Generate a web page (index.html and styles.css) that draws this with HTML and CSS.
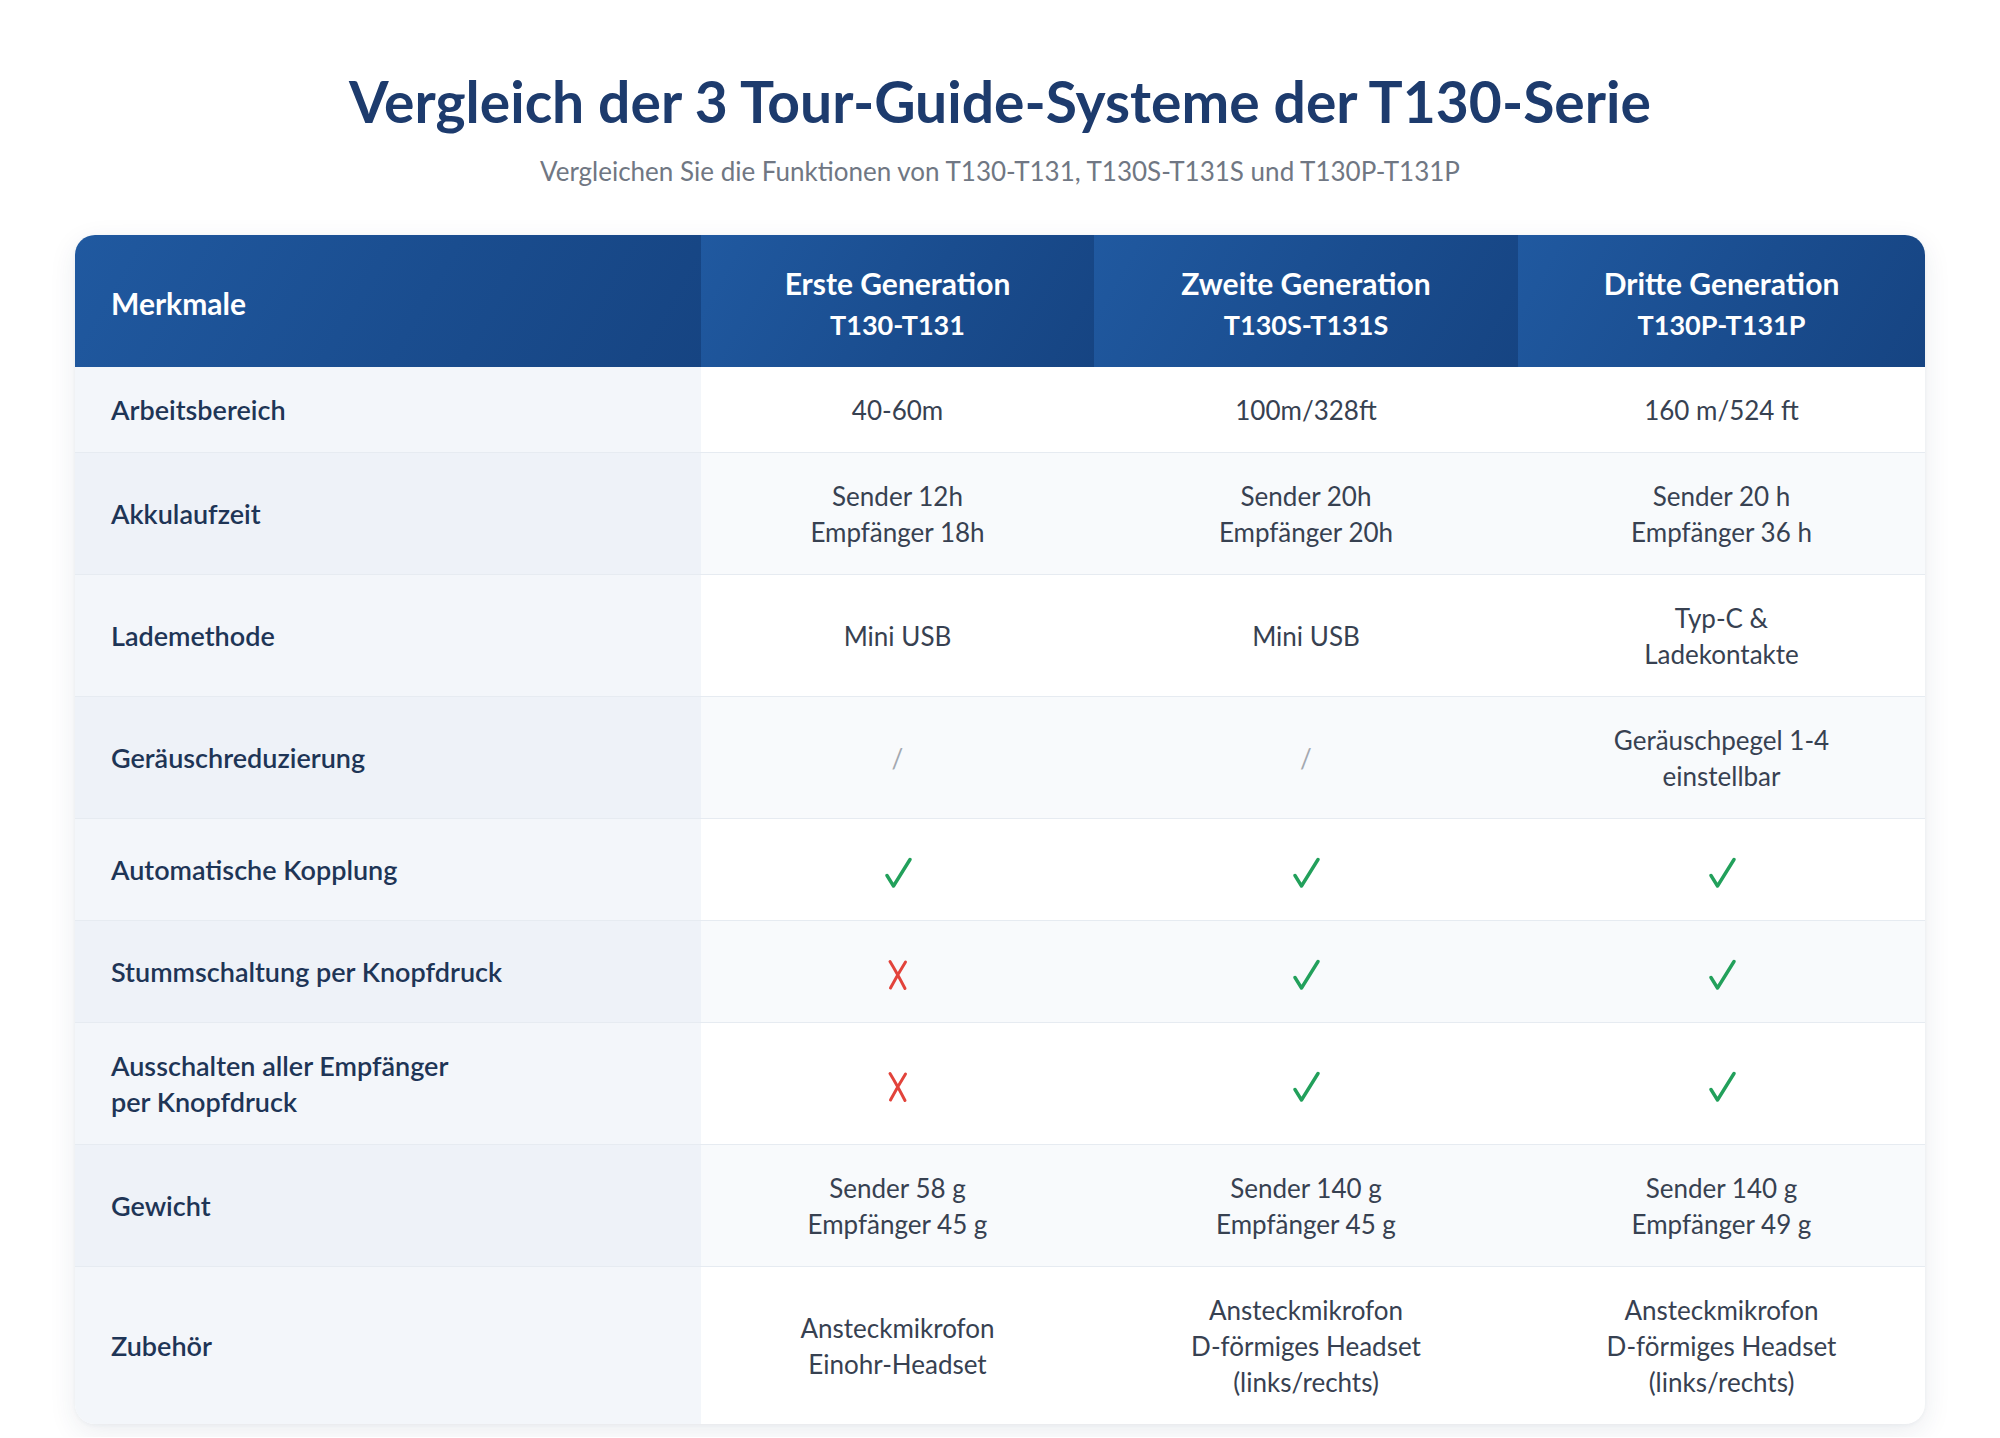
FILE: index.html
```html
<!DOCTYPE html>
<html lang="de">
<head>
<meta charset="utf-8">
<title>Vergleich der T130-Serie</title>
<link rel="stylesheet" href="styles.css">
</head>
<body>
<main class="page">
  <header class="intro">
    <h1 class="title">Vergleich der 3 Tour-Guide-Systeme der T130-Serie</h1>
    <p class="subtitle">Vergleichen Sie die Funktionen von T130-T131, T130S-T131S und T130P-T131P</p>
  </header>

  <div class="table-card">
    <table class="compare">
      <colgroup>
        <col class="c-feature">
        <col class="c-gen1">
        <col class="c-gen2">
        <col class="c-gen3">
      </colgroup>
      <thead>
        <tr>
          <th class="th-feature">Merkmale</th>
          <th><span class="gen">Erste Generation</span><span class="model">T130-T131</span></th>
          <th><span class="gen">Zweite Generation</span><span class="model">T130S-T131S</span></th>
          <th><span class="gen">Dritte Generation</span><span class="model">T130P-T131P</span></th>
        </tr>
      </thead>
      <tbody>
        <tr>
          <td class="feature">Arbeitsbereich</td>
          <td>40-60m</td>
          <td>100m/328ft</td>
          <td>160 m/524 ft</td>
        </tr>
        <tr>
          <td class="feature">Akkulaufzeit</td>
          <td>Sender 12h<br>Empfänger 18h</td>
          <td>Sender 20h<br>Empfänger 20h</td>
          <td>Sender 20 h<br>Empfänger 36 h</td>
        </tr>
        <tr>
          <td class="feature">Lademethode</td>
          <td>Mini USB</td>
          <td>Mini USB</td>
          <td>Typ-C &amp;<br>Ladekontakte</td>
        </tr>
        <tr>
          <td class="feature">Geräuschreduzierung</td>
          <td><span class="none">/</span></td>
          <td><span class="none">/</span></td>
          <td>Geräuschpegel 1-4<br>einstellbar</td>
        </tr>
        <tr>
          <td class="feature">Automatische Kopplung</td>
          <td class="mark"><svg class="icon-yes" viewBox="0 0 28 32" aria-label="ja"><path d="M3 18.5 L9.5 29 L26 2.5"/></svg></td>
          <td class="mark"><svg class="icon-yes" viewBox="0 0 28 32" aria-label="ja"><path d="M3 18.5 L9.5 29 L26 2.5"/></svg></td>
          <td class="mark"><svg class="icon-yes" viewBox="0 0 28 32" aria-label="ja"><path d="M3 18.5 L9.5 29 L26 2.5"/></svg></td>
        </tr>
        <tr>
          <td class="feature">Stummschaltung per Knopfdruck</td>
          <td class="mark"><svg class="icon-no" viewBox="0 0 24 32" aria-label="nein"><path d="M4 2.5 Q11 14 19 29.5 M19.5 3 Q12 15 4.5 29"/></svg></td>
          <td class="mark"><svg class="icon-yes" viewBox="0 0 28 32" aria-label="ja"><path d="M3 18.5 L9.5 29 L26 2.5"/></svg></td>
          <td class="mark"><svg class="icon-yes" viewBox="0 0 28 32" aria-label="ja"><path d="M3 18.5 L9.5 29 L26 2.5"/></svg></td>
        </tr>
        <tr>
          <td class="feature">Ausschalten aller Empfänger<br>per Knopfdruck</td>
          <td class="mark"><svg class="icon-no" viewBox="0 0 24 32" aria-label="nein"><path d="M4 2.5 Q11 14 19 29.5 M19.5 3 Q12 15 4.5 29"/></svg></td>
          <td class="mark"><svg class="icon-yes" viewBox="0 0 28 32" aria-label="ja"><path d="M3 18.5 L9.5 29 L26 2.5"/></svg></td>
          <td class="mark"><svg class="icon-yes" viewBox="0 0 28 32" aria-label="ja"><path d="M3 18.5 L9.5 29 L26 2.5"/></svg></td>
        </tr>
        <tr>
          <td class="feature">Gewicht</td>
          <td>Sender 58 g<br>Empfänger 45 g</td>
          <td>Sender 140 g<br>Empfänger 45 g</td>
          <td>Sender 140 g<br>Empfänger 49 g</td>
        </tr>
        <tr>
          <td class="feature">Zubehör</td>
          <td>Ansteckmikrofon<br>Einohr-Headset</td>
          <td>Ansteckmikrofon<br>D-förmiges Headset<br>(links/rechts)</td>
          <td>Ansteckmikrofon<br>D-förmiges Headset<br>(links/rechts)</td>
        </tr>
      </tbody>
    </table>
  </div>
</main>
</body>
</html>
```

FILE: styles.css
```css
* { box-sizing: border-box; }

html, body {
  margin: 0;
  padding: 0;
  background: #ffffff;
}

body {
  font-family: Lato, "Open Sans", "Liberation Sans", sans-serif;
  color: #374151;
}

.page {
  padding: 67px 75px 13px;
}

.intro {
  text-align: center;
}

.title {
  margin: 0;
  font-size: 57px;
  line-height: 1.2;
  font-weight: 700;
  color: #1d3b6d;
}

.subtitle {
  margin: 21px 0 0;
  font-size: 26px;
  line-height: 1.2;
  color: #707783;
}

.table-card {
  margin-top: 47px;
  border-radius: 20px;
  overflow: hidden;
  background: #ffffff;
  box-shadow: 0 8px 28px rgba(30, 50, 90, 0.09), 0 1px 4px rgba(30, 50, 90, 0.05);
}

.compare {
  width: 100%;
  border-collapse: collapse;
  table-layout: fixed;
}

.c-feature { width: 626px; }
.c-gen1 { width: 393px; }
.c-gen2 { width: 424px; }
.c-gen3 { width: 407px; }

.compare th {
  height: 132px;
  padding: 28px 20px 22px;
  font-weight: 700;
  color: #ffffff;
  text-align: center;
  vertical-align: middle;
  background: linear-gradient(120deg, #2059a0 0%, #1a4d8f 55%, #164482 100%);
}

.compare th .gen,
.compare th .model {
  display: block;
  line-height: 41px;
}

.compare th .gen {
  font-size: 30px;
}

.compare th .model {
  font-size: 27px;
}

.compare th.th-feature {
  text-align: left;
  padding-left: 36px;
  font-size: 30px;
  line-height: 41px;
}

.compare td {
  padding: 25px 20px 24px;
  font-size: 26px;
  line-height: 36px;
  text-align: center;
  vertical-align: middle;
  color: #374151;
  border-bottom: 1px solid #e6ebf1;
}

.compare tbody tr:nth-child(even) td {
  background: #f8fafc;
}

.compare tbody tr:last-child td {
  border-bottom: none;
}

.compare td.feature {
  text-align: left;
  padding-left: 36px;
  font-size: 27px;
  font-weight: 600;
  color: #1e3556;
  background: #f3f6fa;
}

.compare tbody tr:nth-child(even) td.feature {
  background: #eef2f8;
}

.compare td.mark {
  line-height: 52px;
}

.none {
  color: #a3a8b0;
}

.icon-yes,
.icon-no {
  display: inline-block;
  vertical-align: middle;
  fill: none;
  stroke-linecap: round;
  stroke-linejoin: round;
}

.icon-yes {
  width: 28px;
  height: 32px;
  stroke: #22a05b;
  stroke-width: 3.4;
}

.icon-no {
  width: 24px;
  height: 32px;
  stroke: #e2433b;
  stroke-width: 3;
}
```
